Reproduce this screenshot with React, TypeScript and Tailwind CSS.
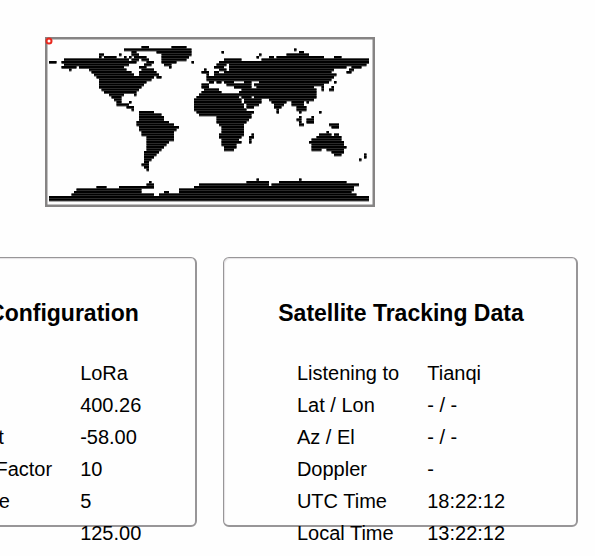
const CELL = 2.5;

// Land cells of the 128x64 world map, one list of [start, end) pairs per row
const LAND: number[][][] = [
  [],
  [],
  [[37, 40], [49, 55]],
  [[30, 57], [98, 99]],
  [[33, 35], [43, 57], [69, 70], [100, 102]],
  [[20, 22], [28, 29], [33, 36], [45, 57], [84, 85], [95, 104]],
  [[20, 21], [22, 27], [30, 31], [32, 33], [34, 39], [45, 56], [83, 84], [88, 90], [91, 110], [114, 117]],
  [[6, 32], [33, 36], [37, 40], [45, 55], [70, 77], [85, 128]],
  [[0, 3], [5, 35], [39, 42], [45, 51], [57, 58], [68, 128]],
  [[6, 32], [38, 41], [46, 49], [67, 71], [72, 127]],
  [[5, 11], [12, 30], [36, 39], [48, 49], [66, 70], [72, 119], [121, 125]],
  [[8, 9], [16, 31], [37, 42], [62, 63], [68, 71], [72, 114], [120, 122]],
  [[17, 33], [36, 43], [61, 64], [66, 68], [70, 113], [119, 121]],
  [[18, 34], [36, 44], [63, 64], [66, 115]],
  [[19, 42], [43, 45], [63, 114]],
  [[20, 41], [63, 113]],
  [[20, 39], [64, 66], [67, 69], [70, 74], [78, 81], [84, 112], [114, 115]],
  [[20, 38], [61, 64], [71, 81], [82, 110]],
  [[20, 37], [61, 64], [74, 81], [83, 106], [109, 110], [113, 114]],
  [[21, 36], [62, 68], [77, 107], [109, 110], [112, 114]],
  [[22, 35], [61, 69], [76, 107]],
  [[24, 30], [34, 35], [60, 107]],
  [[25, 29], [59, 76], [77, 81], [82, 107]],
  [[26, 29], [58, 77], [78, 85], [88, 106]],
  [[27, 29], [32, 33], [58, 77], [78, 85], [89, 95], [97, 102], [103, 104]],
  [[27, 32], [58, 78], [79, 84], [90, 94], [97, 102]],
  [[31, 34], [58, 78], [79, 82], [90, 93], [99, 103]],
  [[33, 34], [58, 79], [91, 92], [99, 103]],
  [[36, 42], [59, 82], [91, 92], [100, 101], [108, 109]],
  [[36, 45], [60, 81]],
  [[36, 46], [67, 81], [100, 101], [105, 106]],
  [[36, 46], [67, 80], [99, 101], [103, 106]],
  [[35, 48], [67, 79], [100, 101], [103, 106]],
  [[35, 50], [68, 78], [100, 102], [112, 116]],
  [[36, 52], [69, 78], [113, 116]],
  [[36, 51], [69, 78]],
  [[37, 50], [69, 78], [111, 112]],
  [[37, 50], [68, 78], [81, 82], [108, 113], [114, 116]],
  [[39, 50], [68, 77], [80, 82], [107, 117]],
  [[39, 50], [69, 76], [80, 81], [105, 117]],
  [[39, 48], [69, 77], [80, 81], [104, 118]],
  [[39, 47], [69, 75], [105, 118]],
  [[39, 46], [70, 75], [105, 119]],
  [[39, 45], [70, 74], [105, 109], [111, 118]],
  [[38, 44], [113, 118]],
  [[38, 43], [114, 117], [126, 127]],
  [[38, 42], [126, 127]],
  [[38, 41], [124, 125]],
  [[38, 40]],
  [[37, 40]],
  [[38, 40]],
  [[39, 40]],
  [],
  [],
  [],
  [[83, 84], [100, 101]],
  [[40, 41], [79, 88], [92, 119]],
  [[39, 42], [60, 88], [89, 124]],
  [[19, 23], [28, 42], [58, 122]],
  [[11, 37], [52, 122]],
  [[10, 37], [46, 48], [52, 121]],
  [[9, 42], [44, 123]],
  [[0, 128]],
  [[0, 128]],
];

const modemRows = [
  ['Mode', 'LoRa'],
  ['Frequency', '400.26'],
  ['Freq. Offset', '-58.00'],
  ['Spreading Factor', '10'],
  ['Coding Rate', '5'],
  ['Bandwidth', '125.00'],
];

const trackingRows = [
  ['Listening to', 'Tianqi'],
  ['Lat / Lon', '- / -'],
  ['Az / El', '- / -'],
  ['Doppler', '-'],
  ['UTC Time', '18:22:12'],
  ['Local Time', '13:22:12'],
];

function LandRows({ height, fill }: { height: number; fill: string }) {
  return (
    <g fill={fill}>
      {LAND.map((runs, row) =>
        runs.map(([start, end]) => (
          <rect
            key={`${row}-${start}`}
            x={start * CELL}
            y={row * CELL}
            width={(end - start) * CELL}
            height={height}
          />
        ))
      )}
    </g>
  );
}

function WorldMap() {
  return (
    <svg
      width="330"
      height="170"
      viewBox="-4 -4 330 170"
      role="img"
      aria-label="Satellite position"
    >
      <rect x="-2.75" y="-2.75" width="327.5" height="167.5" fill="none" stroke="#868484" strokeWidth="2.5" />
      {/* grey under the black scan lines */}
      <LandRows height={3} fill="#555" />
      <LandRows height={2} fill="#000" />
      {/* satellite marker */}
      <circle cx="0" cy="0" r="2.5" fill="#fff" stroke="#e8281e" strokeWidth="2" />
    </svg>
  );
}

function DataCard({ title, rows }: { title: string; rows: string[][] }) {
  return (
    <section className="h-[270px] w-[355px] shrink-0 rounded-md border border-r-2 border-b-2 border-[#989698] pt-[39px] pl-0.5 shadow-[inset_1px_1px_1px_#e4e2e4]">
      <h2 className="text-center text-[23px] font-bold leading-8">{title}</h2>
      <table className="mx-auto mt-7 text-xl leading-8">
        <tbody>
          {rows.map(([label, value]) => (
            <tr key={label}>
              <th scope="row" className="p-0 pr-7 text-left font-normal whitespace-nowrap">
                {label}
              </th>
              <td className="p-0 whitespace-nowrap">{value}</td>
            </tr>
          ))}
        </tbody>
      </table>
    </section>
  );
}

export default function App() {
  return (
    <div className="flex min-h-screen justify-end overflow-hidden bg-[#fefefe] pr-[17px] font-['Liberation_Sans',Arial,sans-serif] text-black">
      <main className="flex shrink-0 flex-col items-center pt-[37px]">
        <WorldMap />
        <div className="mt-[50px] flex gap-[26px]">
          <DataCard title="Modem Configuration" rows={modemRows} />
          <DataCard title="Satellite Tracking Data" rows={trackingRows} />
        </div>
      </main>
    </div>
  );
}
